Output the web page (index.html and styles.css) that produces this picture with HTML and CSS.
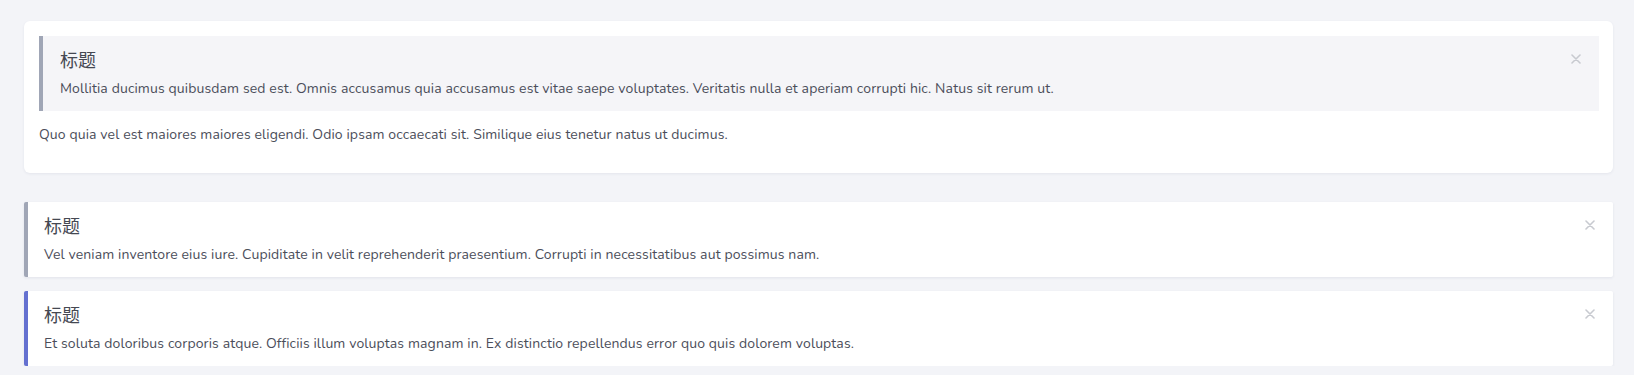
FILE: index.html
```html
<!DOCTYPE html>
<html lang="zh">
<head>
<meta charset="utf-8">
<title>Alerts</title>
<link rel="stylesheet" href="styles.css">
</head>
<body>
<main class="page">
  <section class="card">
    <div class="alert alert-soft">
      <div class="alert-body">
        <h4 class="alert-title">标题</h4>
        <p class="alert-desc">Mollitia ducimus quibusdam sed est. Omnis accusamus quia accusamus est vitae saepe voluptates. Veritatis nulla et aperiam corrupti hic. Natus sit rerum ut.</p>
      </div>
      <button class="alert-close" aria-label="close"><svg viewBox="0 0 10 10" width="10" height="10"><path d="M1 1L9 9M9 1L1 9" stroke="currentColor" stroke-width="1.6" stroke-linecap="round"/></svg></button>
    </div>
    <p class="card-text">Quo quia vel est maiores maiores eligendi. Odio ipsam occaecati sit. Similique eius tenetur natus ut ducimus.</p>
  </section>

  <div class="stack">
    <div class="alert alert-plain">
      <div class="alert-body">
        <h4 class="alert-title">标题</h4>
        <p class="alert-desc">Vel veniam inventore eius iure. Cupiditate in velit reprehenderit praesentium. Corrupti in necessitatibus aut possimus nam.</p>
      </div>
      <button class="alert-close" aria-label="close"><svg viewBox="0 0 10 10" width="10" height="10"><path d="M1 1L9 9M9 1L1 9" stroke="currentColor" stroke-width="1.6" stroke-linecap="round"/></svg></button>
    </div>
    <div class="alert alert-plain alert-primary">
      <div class="alert-body">
        <h4 class="alert-title">标题</h4>
        <p class="alert-desc">Et soluta doloribus corporis atque. Officiis illum voluptas magnam in. Ex distinctio repellendus error quo quis dolorem voluptas.</p>
      </div>
      <button class="alert-close" aria-label="close"><svg viewBox="0 0 10 10" width="10" height="10"><path d="M1 1L9 9M9 1L1 9" stroke="currentColor" stroke-width="1.6" stroke-linecap="round"/></svg></button>
    </div>
  </div>
</main>
</body>
</html>
```

FILE: styles.css
```css
* { box-sizing: border-box; }
html, body { margin: 0; }
body {
  background: #f3f4f8;
  font-family: "Nunito", Lato, "Noto Sans CJK SC", sans-serif;
  color: #4b4e5a;
}
.page {
  padding: 21px 21px 0 24px;
}
.card {
  background: #fff;
  border-radius: 6px;
  padding: 15px 14px 28px 15px;
  box-shadow: 0 1px 3px rgba(30, 40, 80, 0.07);
}
.alert {
  display: flex;
  align-items: flex-start;
  border-left: 4px solid #a0a6b6;
  padding: 11px 16px 12px 17px;
  min-height: 75px;
}
.alert-soft { background: #f5f5f8; }
.alert-plain {
  background: #fff;
  border-radius: 2px;
  box-shadow: 0 1px 3px rgba(30, 40, 80, 0.08);
  padding-left: 16px;
}
.alert-primary { border-left-color: #6470d0; }
.alert-body { flex: 1; }
.alert-title {
  margin: 0;
  font-family: "Noto Sans CJK SC", sans-serif;
  font-weight: 400;
  font-size: 18px;
  line-height: 25px;
  color: #454852;
}
.alert-desc {
  margin: 7px 0 0;
  font-size: 14px;
  line-height: 20px;
  letter-spacing: 0.12px;
}
.alert-close {
  border: 0;
  background: none;
  padding: 0;
  margin: 7px 2px 0 0;
  color: #c8cad0;
  display: flex;
  cursor: pointer;
}
.card-text {
  margin: 14px 0 0;
  font-size: 14px;
  line-height: 20px;
  letter-spacing: 0.12px;
}
.stack {
  margin-top: 29px;
  display: flex;
  flex-direction: column;
  gap: 14px;
}
```
